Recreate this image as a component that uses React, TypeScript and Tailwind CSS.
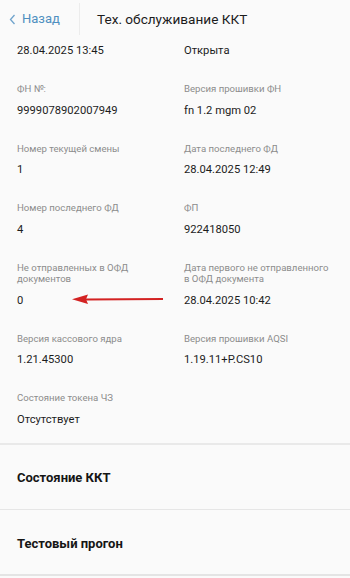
import React from "react";

type Item = { label?: string; value: string };

const rows: [Item, Item][] = [
  [{ label: "ФН №:", value: "9999078902007949" }, { label: "Версия прошивки ФН", value: "fn 1.2 mgm 02" }],
  [{ label: "Номер текущей смены", value: "1" }, { label: "Дата последнего ФД", value: "28.04.2025 12:49" }],
  [{ label: "Номер последнего ФД", value: "4" }, { label: "ФП", value: "922418050" }],
  [
    { label: "Не отправленных в ОФД документов", value: "0" },
    { label: "Дата первого не отправленного в ОФД документа", value: "28.04.2025 10:42" },
  ],
  [{ label: "Версия кассового ядра", value: "1.21.45300" }, { label: "Версия прошивки AQSI", value: "1.19.11+P.CS10" }],
  [{ label: "Состояние токена ЧЗ", value: "Отсутствует" }, { value: "" }],
];

function Cell({ item }: { item: Item }) {
  return (
    <div className="flex flex-col pr-[16px]">
      {item.label && (
        <div className="text-[9.6px] leading-[11.5px] text-[#8c8c8c]">{item.label}</div>
      )}
      <div className="mt-[8px] text-[11.2px] leading-[16px] text-[#1c1c1c]">{item.value}</div>
    </div>
  );
}

export default function App() {
  return (
    <div
      className="w-[350px] h-[578px] overflow-hidden bg-[#fafafa] relative"
      style={{ fontFamily: "Roboto, 'Noto Sans', sans-serif" }}
    >
      <header className="h-[38px] flex items-center">
        <div className="w-[80px] h-[32px] flex items-center pl-[9px] gap-[6px] border-r border-[#ececec]">
          <svg width="7" height="11" viewBox="0 0 7 11" fill="none">
            <path d="M5.5 1 L1.5 5.5 L5.5 10" stroke="#6fa3cc" strokeWidth="1.3" />
          </svg>
          <span className="text-[13px] text-[#4f8fc0]">Назад</span>
        </div>
        <div className="pl-[17px] text-[13.6px] text-[#1c1c1c]">Тех. обслуживание ККТ</div>
      </header>

      <div className="grid grid-cols-[167px_1fr] pl-[17px] pt-[5px]">
        <div className="text-[11.2px] leading-[16px] text-[#1c1c1c]">28.04.2025 13:45</div>
        <div className="text-[11.2px] leading-[16px] text-[#1c1c1c]">Открыта</div>
      </div>

      <div className="flex flex-col gap-[24px] pl-[17px] pt-[24px]">
        {rows.map((r, i) => (
          <div key={i} className="grid grid-cols-[167px_1fr]">
            <Cell item={r[0]} />
            {r[1].label ? <Cell item={r[1]} /> : <div />}
          </div>
        ))}
      </div>

      <div className="mt-[15px] border-t-2 border-[#e9e9e9]">
        <div className="h-[65px] pt-[2px] flex items-center pl-[17px] text-[13px] font-bold text-[#151515] border-b border-[#e6e6e6]">
          Состояние ККТ
        </div>
        <div className="h-[66px] pt-[4px] flex items-center pl-[17px] text-[13px] font-bold text-[#151515] border-b-2 border-[#e4e4e4]">
          Тестовый прогон
        </div>
      </div>

      <svg
        className="absolute left-[70px] top-[293px]"
        width="96"
        height="12"
        viewBox="0 0 96 12"
      >
        <path d="M16 5.5 L93 5 L93 7 L16 7.5 Z" fill="#d32222" />
        <path d="M2 6.2 L18 1.5 L16 6.3 L18 11 Z" fill="#d32222" />
      </svg>
    </div>
  );
}
